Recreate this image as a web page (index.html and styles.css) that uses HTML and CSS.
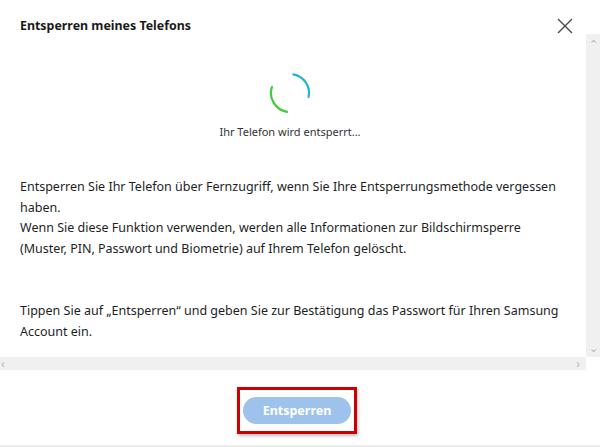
FILE: index.html
```html
<!DOCTYPE html>
<html lang="de">
<head>
    <meta charset="UTF-8">
    <meta name="viewport" content="width=device-width, initial-scale=1.0">
    <title>Entsperren meines Telefons</title>
    <link rel="stylesheet" href="styles.css">
</head>
<body>

    <div class="dialog">
        <!-- Header -->
        <div class="dialog-header">
            <h1 class="dialog-title">Entsperren meines Telefons</h1>
            <button class="close-btn" aria-label="Schließen">
                <svg width="16" height="16" viewBox="0 0 16 16">
                    <path d="M1 1 L15 15 M15 1 L1 15" stroke="#4a4a4a" stroke-width="1.4" fill="none"/>
                </svg>
            </button>
        </div>

        <!-- Scrollable body -->
        <div class="dialog-scroll">
            <div class="scroll-row">
                <div class="dialog-body">
                    <div class="status">
                        <svg class="spinner" width="44" height="44" viewBox="0 0 44 44">
                            <!-- blue arc, top to right -->
                            <path d="M25.3 3.3 A19 19 0 0 1 40.6 26" stroke="#22b3d6" stroke-width="2.2" fill="none" stroke-linecap="round"/>
                            <!-- green arc, left to bottom -->
                            <path d="M3.9 16.1 A19 19 0 0 0 19 40.8" stroke="#3fcb3a" stroke-width="2.2" fill="none" stroke-linecap="round"/>
                        </svg>
                        <div class="status-text">Ihr Telefon wird entsperrt...</div>
                    </div>

                    <p class="info">
                        Entsperren Sie Ihr Telefon über Fernzugriff, wenn Sie Ihre Entsperrungsmethode vergessen haben.<br>
                        Wenn Sie diese Funktion verwenden, werden alle Informationen zur Bildschirmsperre (Muster, PIN, Passwort und Biometrie) auf Ihrem Telefon gelöscht.
                    </p>

                    <p class="info hint">
                        Tippen Sie auf „Entsperren“ und geben Sie zur Bestätigung das Passwort für Ihren Samsung Account ein.
                    </p>
                </div>

                <!-- Vertical scrollbar -->
                <div class="vscroll">
                    <span class="arrow">&#8963;</span>
                    <span class="arrow">&#8964;</span>
                </div>
            </div>

            <!-- Horizontal scrollbar -->
            <div class="hscroll-row">
                <div class="hscroll">
                    <span class="arrow-h">&#8249;</span>
                    <span class="arrow-h">&#8250;</span>
                </div>
                <div class="corner"></div>
            </div>
        </div>

        <!-- Footer -->
        <div class="dialog-footer">
            <div class="highlight">
                <button class="unlock-btn" disabled>Entsperren</button>
            </div>
        </div>
    </div>

</body>
</html>
```

FILE: styles.css
```css
/* General page */
body {
    margin: 0;
    font-family: 'Noto Sans', 'Open Sans', sans-serif;
    color: #1a1a1a;
    background: #ffffff;
}

.dialog {
    width: 600px;
    height: 447px;
    display: flex;
    flex-direction: column;
    border-bottom: 2px solid #ececec;
    box-sizing: border-box;
}

/* Header */
.dialog-header {
    height: 34px;
    display: flex;
    align-items: flex-end;
    justify-content: space-between;
    padding: 0 27px 0 20px;
}

.dialog-title {
    margin: 0;
    font-size: 12.4px;
    font-weight: bold;
    line-height: 20px;
    position: relative;
    top: 2px;
}

.close-btn {
    border: none;
    background: none;
    padding: 0;
    position: relative;
    top: 3px;
    cursor: pointer;
}

/* Scroll area */
.dialog-scroll {
    display: flex;
    flex-direction: column;
}

.scroll-row {
    display: flex;
    height: 323px;
}

.dialog-body {
    flex: 1;
    padding: 0 20px 0 20px;
    overflow: hidden;
}

.status {
    display: flex;
    flex-direction: column;
    align-items: center;
    padding-top: 37px;
    padding-right: 6px;
}

.spinner {
    display: block;
}

.status-text {
    font-size: 11px;
    margin-top: 9px;
    color: #333;
}

.info {
    font-size: 12.5px;
    line-height: 20.5px;
    margin: 38px 0 0 0;
    color: #1e1e1e;
}

.info.hint {
    margin-top: 42px;
}

.vscroll {
    width: 14px;
    background: #f0f0f0;
    display: flex;
    flex-direction: column;
    justify-content: space-between;
    align-items: center;
    color: #b5b5b5;
    font-size: 11px;
    padding: 4px 0;
    box-sizing: border-box;
}

.hscroll-row {
    display: flex;
    height: 13px;
}

.hscroll {
    flex: 1;
    background: #f0f0f0;
    display: flex;
    justify-content: space-between;
    align-items: center;
    padding: 0 6px 0 1px;
    color: #b5b5b5;
    font-size: 12px;
    line-height: 13px;
}

.corner {
    width: 14px;
}

.arrow, .arrow-h {
    line-height: 1;
}

/* Footer */
.dialog-footer {
    flex: 1;
    display: flex;
    justify-content: center;
    padding-top: 17px;
    padding-right: 6px;
}

.highlight {
    align-self: flex-start;
    border: 3px solid #cc0000;
    padding: 7px 3px 7px 3px;
    box-shadow: 1px 2px 3px rgba(0, 0, 0, 0.25);
}

.unlock-btn {
    width: 108px;
    height: 27px;
    border: none;
    border-radius: 14px;
    background: #9dc3ec;
    color: #ffffff;
    font-family: 'Noto Sans', sans-serif;
    font-size: 12.5px;
    font-weight: bold;
}
```
